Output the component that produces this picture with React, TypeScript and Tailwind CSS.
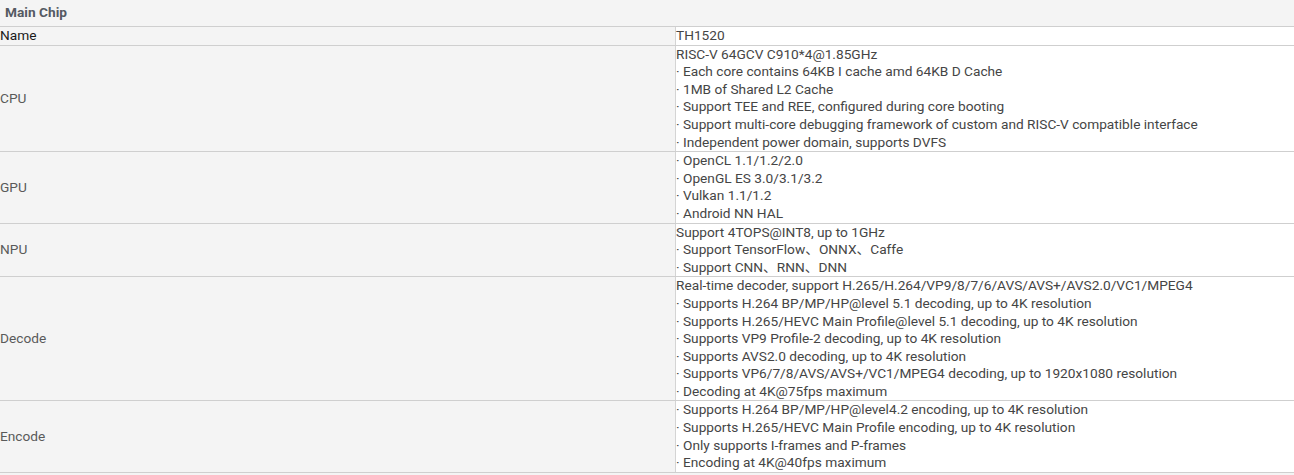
const rows: { label: string; dark?: boolean; lines: string[] }[] = [
  { label: "Name", dark: true, lines: ["TH1520"] },
  {
    label: "CPU",
    lines: [
      "RISC-V 64GCV C910*4@1.85GHz",
      "· Each core contains 64KB I cache amd 64KB D Cache",
      "· 1MB of Shared L2 Cache",
      "· Support TEE and REE, configured during core booting",
      "· Support multi-core debugging framework of custom and RISC-V compatible interface",
      "· Independent power domain, supports DVFS",
    ],
  },
  {
    label: "GPU",
    lines: [
      "· OpenCL 1.1/1.2/2.0",
      "· OpenGL ES 3.0/3.1/3.2",
      "· Vulkan 1.1/1.2",
      "· Android NN HAL",
    ],
  },
  {
    label: "NPU",
    lines: [
      "Support 4TOPS@INT8, up to 1GHz",
      "· Support TensorFlow、ONNX、Caffe",
      "· Support CNN、RNN、DNN",
    ],
  },
  {
    label: "Decode",
    lines: [
      "Real-time decoder, support H.265/H.264/VP9/8/7/6/AVS/AVS+/AVS2.0/VC1/MPEG4",
      "· Supports H.264 BP/MP/HP@level 5.1 decoding, up to 4K resolution",
      "· Supports H.265/HEVC Main Profile@level 5.1 decoding, up to 4K resolution",
      "· Supports VP9 Profile-2 decoding, up to 4K resolution",
      "· Supports AVS2.0 decoding, up to 4K resolution",
      "· Supports VP6/7/8/AVS/AVS+/VC1/MPEG4 decoding, up to 1920x1080 resolution",
      "· Decoding at 4K@75fps maximum",
    ],
  },
  {
    label: "Encode",
    lines: [
      "· Supports H.264 BP/MP/HP@level4.2 encoding, up to 4K resolution",
      "· Supports H.265/HEVC Main Profile encoding, up to 4K resolution",
      "· Only supports I-frames and P-frames",
      "· Encoding at 4K@40fps maximum",
    ],
  },
];

export default function App() {
  return (
    <div
      className="min-h-screen w-full bg-[#f4f4f4] text-[13.7px] leading-[17.6px]"
      style={{ fontFamily: "Roboto, 'Noto Sans CJK SC', sans-serif" }}
    >
      <div className="h-[26px] flex items-center pl-[5px] font-bold text-[#555a63]">
        Main Chip
      </div>
      <div className="border-b border-[#cfcfcf]">
        {rows.map((row) => (
          <div key={row.label} className="flex border-t border-[#cfcfcf]">
            <div
              className={`w-[676px] shrink-0 flex items-center border-r border-[#d4d4d4] bg-[#f4f4f4] ${
                row.dark ? "text-[#1a1a1a]" : "text-[#5a5a5a]"
              }`}
            >
              {row.label}
            </div>
            <div className="flex-1 bg-white text-[#454545]">
              {row.lines.map((line, i) => (
                <div key={i} className="whitespace-pre">
                  {line}
                </div>
              ))}
            </div>
          </div>
        ))}
      </div>
    </div>
  );
}
